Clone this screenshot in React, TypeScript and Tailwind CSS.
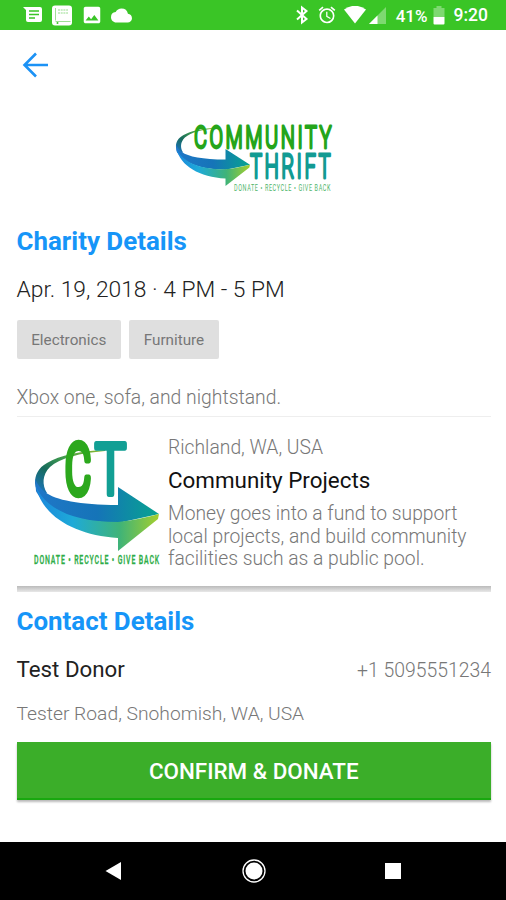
import { MdAlarm, MdCloud, MdImage } from "react-icons/md";

// status bar --------------------------------------------------------------
function StatusBar() {
  return (
    <div className="flex h-[30px] items-center justify-between bg-[#3ac526] pr-[18px] pl-[23px] text-white">
      <div className="flex items-center">
        <svg width="20" height="18" viewBox="0 0 20 18">
          <path d="M0 1H17Q19 1 19 3V14Q19 16 17 16H5Q3 16 3 14V4Z" fill="#fff" />
          <path d="M6 5H16M6 8.500H16M6 12H12" stroke="#3ac526" strokeWidth="1.300" />
        </svg>
        <svg className="ml-[9px]" width="21" height="21" viewBox="0 0 21 21">
          <rect x="0" y="0.500" width="20" height="20" rx="3" fill="#fff" />
          <path d="M3.500 3V15.500M3.500 16.500H18.500" stroke="#9fdf95" strokeWidth="1" />
          <path d="M6 5H16M6 8H16" stroke="#b9e8b2" strokeWidth="1.500" strokeDasharray="2 0.700" />
          <circle cx="5.500" cy="18" r="1" fill="#3ac526" />
        </svg>
        <MdImage className="ml-[8px]" size={22} />
        <MdCloud className="ml-[8px]" size={21} />
      </div>
      <div className="flex items-center">
        <svg width="20" height="20" viewBox="0 0 20 20" fill="none" stroke="#fff" strokeWidth="2">
          <path d="M5 5.500L14.500 14L10 17.500V2.500L14.500 6L5 14.500" />
        </svg>
        <MdAlarm className="ml-[5px]" size={20} />
        <svg className="ml-[7px]" width="22" height="18" viewBox="0 0 22 18">
          <path d="M0 3.500Q11 -4 22 3.500L11 17.500Z" fill="#fff" />
        </svg>
        <svg className="ml-[3px]" width="17" height="17" viewBox="0 0 17 17">
          <path d="M17 0V17H0Z" fill="#fff" opacity="0.350" />
          <path d="M8.500 8.500V17H0Z" fill="#fff" />
        </svg>
        <span className="ml-[10px] pt-[2px] text-[17px] leading-none font-medium">41%</span>
        <svg className="ml-[5px]" width="12" height="19" viewBox="0 0 12 19">
          <path d="M0.500 2H3.500V0H8.500V2H11.500V11H0.500Z" fill="#fff" opacity="0.350" />
          <path d="M0.500 11H11.500V17.500Q11.500 18.500 10.500 18.500H1.500Q0.500 18.500 0.500 17.500Z" fill="#fff" />
        </svg>
        <span className="ml-[9px] pt-[2px] text-[17.500px] leading-none font-medium">9:20</span>
      </div>
    </div>
  );
}

// curved arrow used by both logos
function Swoosh({ id }: { id: string }) {
  return (
    <>
      <defs>
        <linearGradient id={id + "top"} x1="0" y1="0" x2="1" y2="0">
          <stop offset="0" stopColor="#2077c8" />
          <stop offset="0.500" stopColor="#1574b8" />
          <stop offset="1" stopColor="#08a390" />
        </linearGradient>
        <linearGradient id={id + "low"} x1="0" y1="0" x2="1" y2="0">
          <stop offset="0" stopColor="#1b86dc" />
          <stop offset="0.300" stopColor="#1eaad8" />
          <stop offset="0.680" stopColor="#3fb378" />
          <stop offset="1" stopColor="#a5cf2d" />
        </linearGradient>
        <linearGradient id={id + "tail"} x1="0" y1="1" x2="1" y2="0">
          <stop offset="0" stopColor="#1c75c8" />
          <stop offset="0.350" stopColor="#176b5c" />
          <stop offset="0.600" stopColor="#3f9a4f" />
          <stop offset="1" stopColor="#8fbc2c" />
        </linearGradient>
      </defs>
      <path d="M85 25C60 26 40 30 27 38C18 43 15 50 15 58L17 68H27C22 60 22 50 30 42C40 33 60 28 85 26Z" fill={`url(#${id}tail)`} />
      <path d="M15 54C18 60 21 64 25 67C35 75 60 80 98 80V62L139 89L98 98C60 97 28 89 16 66Z" fill={`url(#${id}top)`} />
      <path d="M15.500 60C24 82 50 97 98 97Q122 94 139 89L138 94L98 126V113C55 110 22 92 15.500 60Z" fill={`url(#${id}low)`} />
    </>
  );
}

function ThriftLogo() {
  return (
    <svg className="overflow-visible" width="180" height="90" viewBox="0 0 180 90" fontFamily="Roboto, sans-serif">
      <g transform="translate(2 3.200) scale(0.597 0.578)">
        <Swoosh id="a" />
      </g>
      <g strokeLinejoin="round" fontWeight="300" strokeWidth="2.800" letterSpacing="4">
        <text x="29" y="38" fontSize="32" textLength="140" lengthAdjust="spacingAndGlyphs" fill="#25a51b" stroke="#25a51b">COMMUNITY</text>
        <text x="85" y="68" fontSize="34" textLength="83" lengthAdjust="spacingAndGlyphs" fill="#129b93" stroke="#129b93">THRIFT</text>
      </g>
      <text x="69" y="80.500" fontSize="9" letterSpacing="1" textLength="97" lengthAdjust="spacingAndGlyphs" fill="#4fb56a">DONATE • RECYCLE • GIVE BACK</text>
    </svg>
  );
}

function ProjectLogo() {
  return (
    <svg className="shrink-0 overflow-visible" width="150" height="150" viewBox="0 0 150 150" fontFamily="Roboto, sans-serif">
      <Swoosh id="b" />
      <g fontWeight="300" strokeLinejoin="round" strokeWidth="7.500">
        <text x="45" y="69" fontSize="70" textLength="26" lengthAdjust="spacingAndGlyphs" fill="#2ca81d" stroke="#2ca81d">C</text>
        <text x="75" y="69" fontSize="70" textLength="31" lengthAdjust="spacingAndGlyphs" fill="#129f94" stroke="#129f94" strokeWidth="6">T</text>
      </g>
      <text x="14" y="139" fontSize="12" fontWeight="500" letterSpacing="1.500" textLength="126" lengthAdjust="spacingAndGlyphs" fill="#2ead48" stroke="#2ead48" strokeWidth="0.300">DONATE • RECYCLE • GIVE BACK</text>
    </svg>
  );
}

function Chip({ label }: { label: string }) {
  return (
    <div className="flex h-[39px] items-center rounded-[2px] bg-[#dfdfdf] px-[14.700px] pt-[2px] text-[15.250px] text-[#777]">
      {label}
    </div>
  );
}

// android navigation bar ----------------------------------------------------
function NavBar() {
  return (
    <nav className="mt-auto flex h-[58px] items-center justify-between bg-black pr-[105px] pl-[105px]">
      <svg width="17" height="20" viewBox="0 0 17 20">
        <path d="M16 1V19L0.500 10Z" fill="#fff" />
      </svg>
      <svg width="24" height="24" viewBox="0 0 24 24">
        <circle cx="12" cy="12" r="11" fill="none" stroke="#fff" strokeWidth="1.300" />
        <circle cx="12" cy="12" r="8.500" fill="#fff" />
      </svg>
      <div className="h-4 w-4 bg-white"></div>
    </nav>
  );
}

export default function App() {
  return (
    <div className="flex h-[900px] w-[506px] flex-col overflow-hidden bg-white font-['Roboto',sans-serif] whitespace-nowrap">
      <StatusBar />
      <header className="flex h-20 items-start pt-[22px] pl-[22px]">
        <svg width="28" height="26" viewBox="0 0 28 26" fill="none" stroke="#1c92f5" strokeWidth="2.600">
          <path d="M26 13H3M14 1.500L2.500 13L14 24.500" />
        </svg>
      </header>
      <main className="pr-[15px] pl-[16.500px]">
        <div className="flex h-[90px] pl-[148.500px]">
          <ThriftLogo />
        </div>
        <h1 className="mt-[25px] text-[25.900px] leading-8 font-bold text-[#1695f8]">Charity Details</h1>
        <p className="mt-[17px] text-[22.800px] leading-8 font-light text-[#222]">Apr. 19, 2018 · 4 PM - 5 PM</p>
        <div className="mt-[14px] flex gap-2">
          <Chip label="Electronics" />
          <Chip label="Furniture" />
        </div>
        <p className="mt-[27px] text-[19.350px] leading-6 font-light text-[#777]">Xbox one, sofa, and nightstand.</p>
        <section className="mt-[6px] flex h-[170px] border-t border-[#eee] pt-2 pl-[3.500px]">
          <ProjectLogo />
          <div className="-ml-[2px] pt-[11px]">
            <p className="text-[19.300px] leading-6 font-light text-[#777]">Richland, WA, USA</p>
            <h2 className="mt-[6px] text-[22.400px] leading-7 text-[#111]">Community Projects</h2>
            <p className="mt-[9px] text-[19.300px] leading-[22.500px] font-light text-[#777]">
              Money goes into a fund to support
              <br />
              local projects, and build community
              <br />
              facilities such as a public pool.
            </p>
          </div>
        </section>
        <div className="h-[6px] bg-linear-to-b from-[#bbb] to-[#e8e8e8]"></div>
        <h1 className="mt-[13px] text-[25.900px] leading-8 font-bold text-[#1695f8]">Contact Details</h1>
        <div className="mt-[17px] flex h-8 items-center justify-between">
          <span className="text-[22.300px] text-[#222]">Test Donor</span>
          <span className="pt-[2px] text-[19.400px] font-light text-[#777]">+1 5095551234</span>
        </div>
        <p className="mt-4 text-[19.250px] leading-6 font-light text-[#777]">Tester Road, Snohomish, WA, USA</p>
        <button className="mt-[16px] flex h-[58px] w-full items-center justify-center border-b-2 border-[#19a80f] bg-[#3bae29] pt-[4px] text-[22.400px] font-medium text-white shadow-[0_2px_2px_#bbb]">
          CONFIRM &amp; DONATE
        </button>
      </main>
      <NavBar />
    </div>
  );
}
